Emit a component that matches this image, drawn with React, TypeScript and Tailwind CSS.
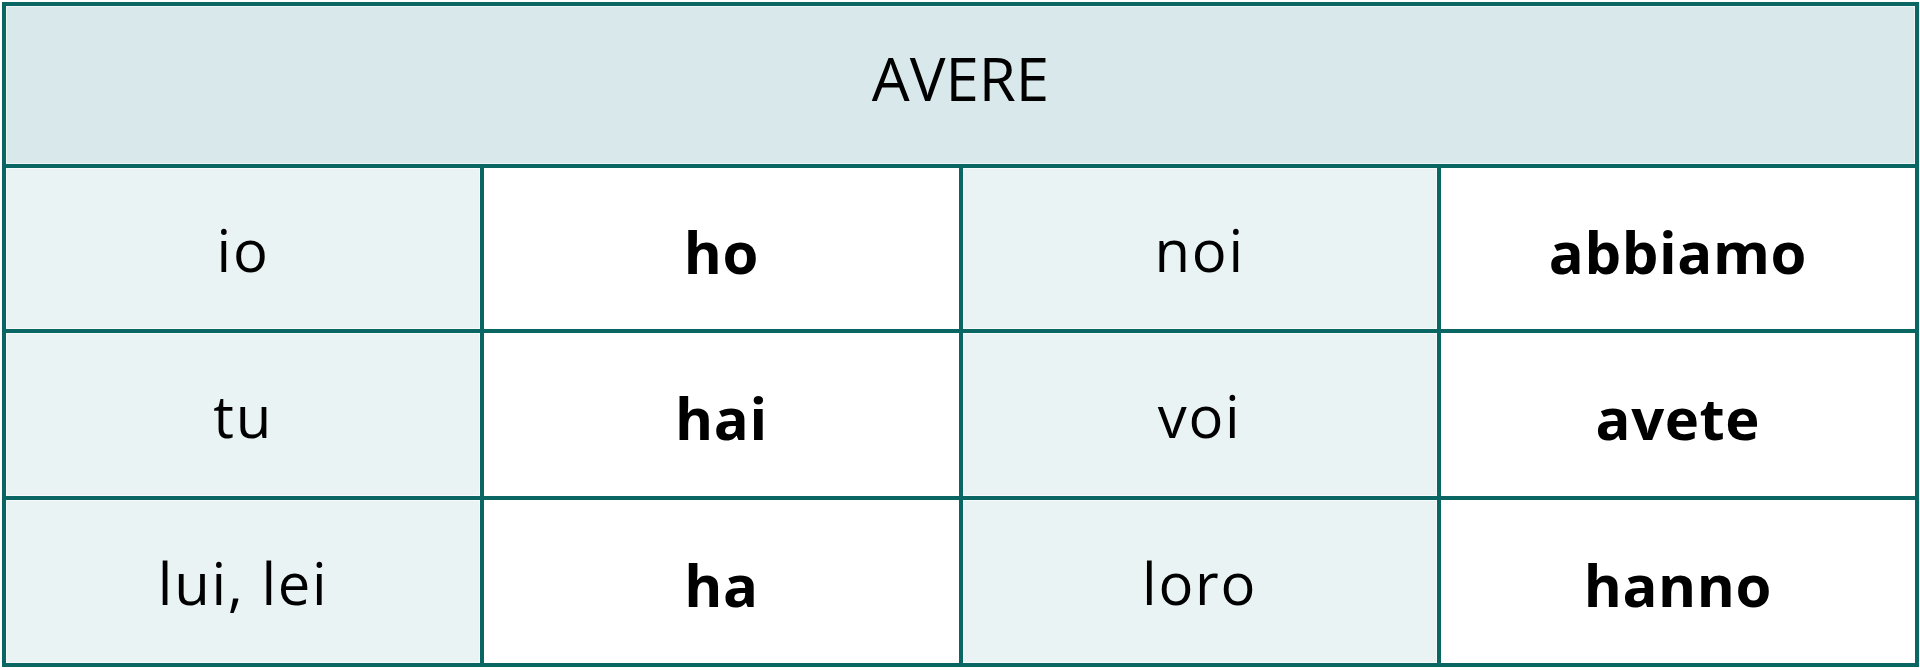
import React from "react";

const rows: [string, string, string, string][] = [
  ["io", "ho", "noi", "abbiamo"],
  ["tu", "hai", "voi", "avete"],
  ["lui, lei", "ha", "loro", "hanno"],
];

const rowH = ["h-[161px]", "h-[163px]", "h-[163px]"];

export default function App() {
  return (
    <div
      className="w-[1920px] h-[670px] bg-white pt-[2px] pl-[2px]"
      style={{ fontFamily: '"Open Sans", "Noto Sans", sans-serif' }}
    >
      <div className="w-[1917px] bg-[#0a6663] p-[4px] flex flex-col gap-[4px]">
        <div className="h-[158px] bg-[#d9e8eb] border border-[#eef5f6] flex items-center justify-center">
          <span className="text-[60px] leading-none text-black mb-[14px]">AVERE</span>
        </div>
        {rows.map((r, i) => (
          <div key={i} className={`grid grid-cols-4 gap-[4px] ${rowH[i]}`}>
            {r.map((t, j) => {
              const pron = j % 2 === 0;
              return (
                <div
                  key={j}
                  className={
                    pron
                      ? "bg-[#eaf3f4] border border-[#f6fafb] flex items-center justify-center"
                      : "bg-white flex items-center justify-center"
                  }
                >
                  <span
                    className={
                      pron
                        ? "text-[58px] leading-none text-black tracking-[0.03em] mt-[2px]"
                        : "text-[58px] leading-none font-bold text-black tracking-[0.01em] mt-[6px]"
                    }
                  >
                    {t}
                  </span>
                </div>
              );
            })}
          </div>
        ))}
      </div>
    </div>
  );
}
